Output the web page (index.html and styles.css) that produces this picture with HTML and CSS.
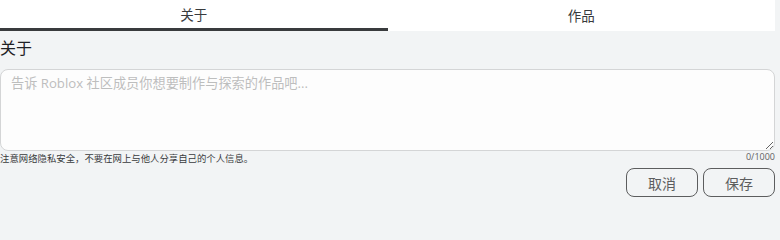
FILE: index.html
```html
<!DOCTYPE html>
<html lang="zh-CN">
<head>
<meta charset="utf-8">
<title>关于</title>
<link rel="stylesheet" href="styles.css">
</head>
<body>
<div class="page">
  <div class="tabs">
    <div class="tab active">关于</div>
    <div class="tab">作品</div>
  </div>
  <h2 class="heading">关于</h2>
  <textarea class="about" placeholder="告诉 Roblox 社区成员你想要制作与探索的作品吧..."></textarea>
  <div class="meta">
    <span class="note">注意网络隐私安全，不要在网上与他人分享自己的个人信息。</span>
    <span class="counter">0/1000</span>
  </div>
  <div class="actions">
    <button class="btn">取消</button>
    <button class="btn">保存</button>
  </div>
</div>
</body>
</html>
```
FILE: styles.css
```css
html, body {
  margin: 0;
  padding: 0;
  background: #f2f4f5;
}
body {
  font-family: "Open Sans", "Noto Sans CJK SC", sans-serif;
  color: #393b3d;
}
.page {
  width: 775px;
}
.tabs {
  display: flex;
  height: 31px;
  background: #ffffff;
}
.tab {
  flex: 1;
  display: flex;
  align-items: center;
  justify-content: center;
  font-size: 13.5px;
  color: #393b3d;
  box-sizing: border-box;
  padding-bottom: 2px;
}
.tab.active {
  border-bottom: 3px solid #393b3d;
  padding-bottom: 0;
}
.heading {
  margin: 6px 0 10px 0;
  font-size: 16px;
  line-height: 22px;
  font-weight: 400;
  color: #1f2124;
}
.about {
  display: block;
  width: 775px;
  height: 82px;
  box-sizing: border-box;
  margin: 0;
  padding: 4px 10px;
  border: 1px solid #d4d5d6;
  border-radius: 8px;
  background: #fdfdfd;
  font-family: "Open Sans", "Noto Sans CJK SC", sans-serif;
  font-size: 13.2px;
  line-height: 18px;
  color: #393b3d;
  resize: vertical;
  outline: none;
}
.about::placeholder {
  color: #bdbebe;
}
.meta {
  display: flex;
  justify-content: space-between;
  align-items: flex-start;
  height: 17px;
}
.note {
  font-size: 9.4px;
  line-height: 14px;
  padding-top: 1px;
  color: #393b3d;
}
.counter {
  font-size: 9px;
  line-height: 12px;
  color: #606162;
}
.actions {
  display: flex;
  justify-content: flex-end;
  gap: 5px;
}
.btn {
  width: 72px;
  height: 29px;
  box-sizing: border-box;
  border: 1px solid #5c5d5e;
  border-radius: 8px;
  background: transparent;
  font-family: "Open Sans", "Noto Sans CJK SC", sans-serif;
  font-size: 14px;
  color: #5c5d5e;
  padding: 0;
}
```
